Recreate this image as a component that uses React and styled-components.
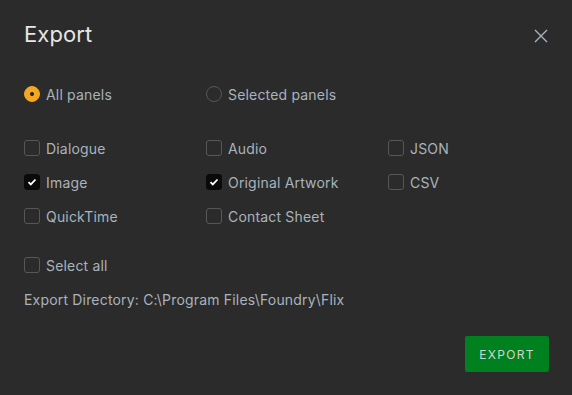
import styled, { createGlobalStyle } from "styled-components";
import { useState } from "react";

const Global = createGlobalStyle`
    html, body {
        margin: 0;
        padding: 0;
        background: #2b2b2b;
    }
    * { box-sizing: border-box; }
`

export default function App(){
    const [scope, setScope] = useState("all");
    const [checks, setChecks] = useState({
        Dialogue: false, Audio: false, JSON: false,
        Image: true, "Original Artwork": true, CSV: false,
        QuickTime: false, "Contact Sheet": false,
    });
    const [all, setAll] = useState(false);

    const items = ["Dialogue", "Audio", "JSON", "Image", "Original Artwork", "CSV", "QuickTime", "Contact Sheet"];

    function toggle(name){
        setChecks({...checks, [name]: !checks[name]});
    }

    return(
        <>
            <Global/>
            <Dialog>
                <Header>
                    <Title>Export</Title>
                    <Close aria-label="close">
                        <svg width="14" height="14" viewBox="0 0 14 14">
                            <path d="M1 1 L13 13 M13 1 L1 13" stroke="#a9b3bc" strokeWidth="1.4"/>
                        </svg>
                    </Close>
                </Header>

                <RadioRow>
                    <Option onClick={() => setScope("all")}>
                        <Radio $on={scope === "all"}/>
                        <Label>All panels</Label>
                    </Option>
                    <Option onClick={() => setScope("selected")}>
                        <Radio $on={scope === "selected"}/>
                        <Label>Selected panels</Label>
                    </Option>
                </RadioRow>

                <Grid>
                    {items.map((name) =>
                        <Option key={name} onClick={() => toggle(name)}>
                            <Box $on={checks[name]}>
                                {checks[name] &&
                                    <svg width="10" height="8" viewBox="0 0 10 8">
                                        <path d="M1.5 4.2 L3.8 6.4 L8.5 1.5" stroke="#ffffff" strokeWidth="1.8" fill="none"/>
                                    </svg>}
                            </Box>
                            <Label>{name}</Label>
                        </Option>
                    )}
                </Grid>

                <SelectAll onClick={() => setAll(!all)}>
                    <Box $on={all}/>
                    <Label>Select all</Label>
                </SelectAll>

                <Directory>Export Directory: C:\Program Files\Foundry\Flix</Directory>

                <Footer>
                    <ExportButton>EXPORT</ExportButton>
                </Footer>
            </Dialog>
        </>
    )
}

const Dialog = styled.div`
    width: 572px;
    height: 395px;
    background: #2b2b2b;
    padding: 21px 23px 0 24px;
    font-family: 'Inter', 'Liberation Sans', sans-serif;
    display: flex;
    flex-direction: column;
`
const Header = styled.div`
    display: flex;
    justify-content: space-between;
    align-items: center;
    height: 26px;
`
const Title = styled.h1`
    margin: 0;
    font-size: 22px;
    font-weight: 400;
    color: #e6e6e6;
    letter-spacing: 0.1px;
`
const Close = styled.button`
    background: none;
    border: none;
    padding: 0;
    margin-right: 1px;
    margin-top: 3px;
    display: flex;
    cursor: pointer;
`
const RadioRow = styled.div`
    display: grid;
    grid-template-columns: 182px 182px;
    margin-top: 38px;
`
const Option = styled.div`
    display: flex;
    align-items: center;
    height: 18px;
    gap: 6px;
    cursor: pointer;
`
const Radio = styled.span`
    width: 16px;
    height: 16px;
    border-radius: 50%;
    border: 1px solid ${p => p.$on ? "#f5a623" : "#575757"};
    background: ${p => p.$on ? "#f5a623" : "transparent"};
    display: flex;
    align-items: center;
    justify-content: center;
    &::after{
        content: "";
        width: 4px;
        height: 4px;
        border-radius: 50%;
        background: #1f1f1f;
        display: ${p => p.$on ? "block" : "none"};
    }
`
const Box = styled.span`
    width: 16px;
    height: 16px;
    border-radius: 3px;
    border: 1px solid ${p => p.$on ? "#0a0a0a" : "#575757"};
    background: ${p => p.$on ? "#0a0a0a" : "transparent"};
    display: flex;
    align-items: center;
    justify-content: center;
    flex-shrink: 0;
`
const Label = styled.span`
    font-size: 14px;
    letter-spacing: 0.18px;
    color: #a9b3bc;
    white-space: nowrap;
`
const Grid = styled.div`
    display: grid;
    grid-template-columns: 182px 182px 182px;
    row-gap: 16px;
    margin-top: 36px;
`
const SelectAll = styled(Option)`
    margin-top: 31px;
    align-self: flex-start;
`
const Directory = styled.p`
    margin: 17px 0 0 0;
    font-size: 14px;
    letter-spacing: 0.18px;
    color: #a9b3bc;
`
const Footer = styled.div`
    display: flex;
    justify-content: flex-end;
    margin-top: 28px;
`
const ExportButton = styled.button`
    width: 84px;
    height: 36px;
    background: #00801f;
    border: none;
    border-radius: 2px;
    color: #d0d6cf;
    font-family: 'Inter', 'Liberation Sans', sans-serif;
    font-size: 12px;
    letter-spacing: 1.3px;
    cursor: pointer;
`
